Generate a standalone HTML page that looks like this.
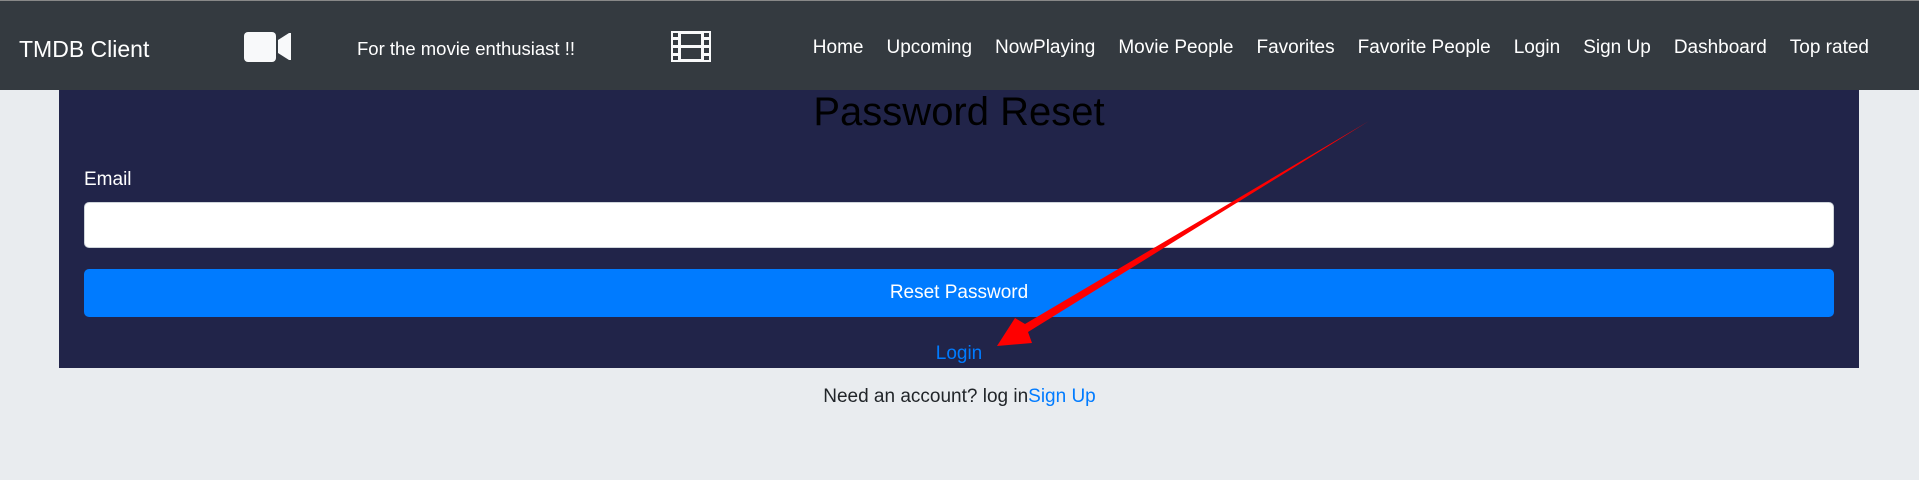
<!DOCTYPE html>
<html><head><meta charset="utf-8"><style>
*{box-sizing:border-box;margin:0;padding:0}
body{width:1919px;height:480px;background:#e9ecef;font-family:"Liberation Sans",sans-serif;position:relative;overflow:hidden}
.nav{position:absolute;left:0;top:0;width:1919px;height:90px;background:#343a40;border-top:1px solid #888}
.t{position:absolute;color:#fff;white-space:nowrap}
.card{position:absolute;left:59px;top:90px;width:1800px;height:278px;background:#212449}
.links{position:absolute;right:50px;top:36px;display:flex;gap:23px;color:#fff;font-size:19px}
</style></head><body>
<div class="nav">
<div class="t" style="left:19px;top:35px;font-size:23px">TMDB Client</div>
<svg style="position:absolute;left:244px;top:30px" width="47" height="31" viewBox="0 0 47 31"><rect x="0" y="1" width="32" height="30" rx="4" fill="#f8f9fa"/><path d="M34 9 L45 2 L47 2 L47 29 L45 29 L34 22 Z" fill="#f8f9fa"/></svg>
<div class="t" style="left:357px;top:37px;font-size:18.5px">For the movie enthusiast !!</div>
<svg style="position:absolute;left:671px;top:30px" width="40" height="31" viewBox="0 0 40 31" fill="#f8f9fa"><path d="M0 0h40v31H0z M2 2v4h5V2z M2 9v5h5V9z M2 17v5h5v-5z M2 25v4h5v-4z M33 2v4h5V2z M33 9v5h5V9z M33 17v5h5v-5z M33 25v4h5v-4z M10 3v11h20V3z M10 17v11h20V17z" fill-rule="evenodd"/></svg>
<div class="links"><span>Home</span><span>Upcoming</span><span>NowPlaying</span><span>Movie People</span><span>Favorites</span><span>Favorite People</span><span>Login</span><span>Sign Up</span><span>Dashboard</span><span>Top rated</span></div>
</div>
<div class="card">
<div class="t" style="left:0;width:1800px;text-align:center;top:0px;font-size:40px;color:#000">Password Reset</div>
<div class="t" style="left:25px;top:79px;font-size:19px">Email</div>
<div style="position:absolute;left:25px;top:112px;width:1750px;height:46px;background:#fff;border-radius:5px;border:1px solid #ced4da"></div>
<div style="position:absolute;left:25px;top:179px;width:1750px;height:48px;background:#007bff;border-radius:5px;color:#fff;font-size:19px;text-align:center;line-height:48px">Reset Password</div>
<div class="t" style="left:0;width:1800px;text-align:center;top:253px;font-size:19px;color:#007bff">Login</div>
</div>
<div class="t" style="left:0;width:1919px;text-align:center;top:386px;font-size:19px;color:#212529">Need an account? log in<span style="color:#007bff">Sign Up</span></div>
<svg style="position:absolute;left:0;top:0" width="1919" height="480"><path d="M1369 121 L1025 324 L1015 318 L997 346 L1032 343 L1028 332 Z" fill="#f00"/></svg>
</body></html>
